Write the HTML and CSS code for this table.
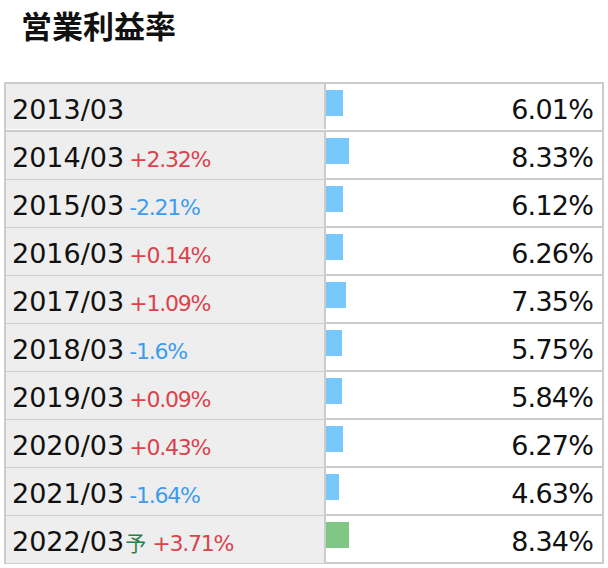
FILE: index.html
```html
<!DOCTYPE html>
<html lang="ja">
<head>
<meta charset="utf-8">
<title>営業利益率</title>
<link rel="stylesheet" href="styles.css">
</head>
<body>
<h1 class="title">営業利益率</h1>
<div class="tbl">
  <div class="row"><div class="label">2013/03</div><div class="val"><span class="bar" style="width:6.01%"></span><span class="num">6.01%</span></div></div>
  <div class="row"><div class="label">2014/03<span class="chg up">+2.32%</span></div><div class="val"><span class="bar" style="width:8.33%"></span><span class="num">8.33%</span></div></div>
  <div class="row"><div class="label">2015/03<span class="chg down">-2.21%</span></div><div class="val"><span class="bar" style="width:6.12%"></span><span class="num">6.12%</span></div></div>
  <div class="row"><div class="label">2016/03<span class="chg up">+0.14%</span></div><div class="val"><span class="bar" style="width:6.26%"></span><span class="num">6.26%</span></div></div>
  <div class="row"><div class="label">2017/03<span class="chg up">+1.09%</span></div><div class="val"><span class="bar" style="width:7.35%"></span><span class="num">7.35%</span></div></div>
  <div class="row"><div class="label">2018/03<span class="chg down">-1.6%</span></div><div class="val"><span class="bar" style="width:5.75%"></span><span class="num">5.75%</span></div></div>
  <div class="row"><div class="label">2019/03<span class="chg up">+0.09%</span></div><div class="val"><span class="bar" style="width:5.84%"></span><span class="num">5.84%</span></div></div>
  <div class="row"><div class="label">2020/03<span class="chg up">+0.43%</span></div><div class="val"><span class="bar" style="width:6.27%"></span><span class="num">6.27%</span></div></div>
  <div class="row"><div class="label">2021/03<span class="chg down">-1.64%</span></div><div class="val"><span class="bar" style="width:4.63%"></span><span class="num">4.63%</span></div></div>
  <div class="row"><div class="label">2022/03<span class="yo">予</span><span class="chg up">+3.71%</span></div><div class="val"><span class="bar est" style="width:8.34%"></span><span class="num">8.34%</span></div></div>
</div>
</body>
</html>
```
FILE: styles.css
```css
html, body {
  margin: 0;
  padding: 0;
  background: #fff;
}
body {
  font-family: "DejaVu Sans", "Noto Sans CJK JP", sans-serif;
  color: #111;
}
.title {
  margin: 7px 0 39px 21px;
  font-family: "Noto Sans CJK JP", sans-serif;
  font-weight: bold;
  font-size: 31px;
  line-height: 36px;
  color: #111;
}
.tbl {
  margin-left: 4px;
  width: 600px;
  box-sizing: border-box;
  border: 2px solid #ccc;
  border-bottom: none;
}
.row {
  display: grid;
  grid-template-columns: 320px 1fr;
  height: 48px;
  box-sizing: border-box;
  padding-bottom: 1px;
  border-bottom: 2px solid #ccc;
}
.label {
  background: #eee;
  border-right: 2px solid #ccc;
  box-sizing: border-box;
  padding: 6px 0 0 6px;
  font-size: 27px;
  line-height: 39px;
  white-space: nowrap;
  color: #111;
}
.chg {
  font-size: 22px;
  letter-spacing: -1.2px;
  margin-left: 5px;
}
.up { color: #d9434c; }
.down { color: #3d9bf0; }
.yo {
  font-family: "Noto Sans CJK JP", sans-serif;
  font-size: 21px;
  color: #2e7d4a;
  margin-left: 1px;
}
.yo + .chg { margin-left: 6px; }
.val {
  display: grid;
  grid-template-columns: 1fr;
  grid-template-rows: 1fr;
}
.bar {
  grid-area: 1 / 1;
  justify-self: start;
  align-self: start;
  margin-top: 6px;
  height: 26px;
  background: #77c9fc;
}
.bar.est { background: #80c684; }
.num {
  grid-area: 1 / 1;
  justify-self: end;
  padding: 6px 9px 0 0;
  font-size: 27px;
  letter-spacing: -0.8px;
  line-height: 39px;
  color: #111;
}
```
